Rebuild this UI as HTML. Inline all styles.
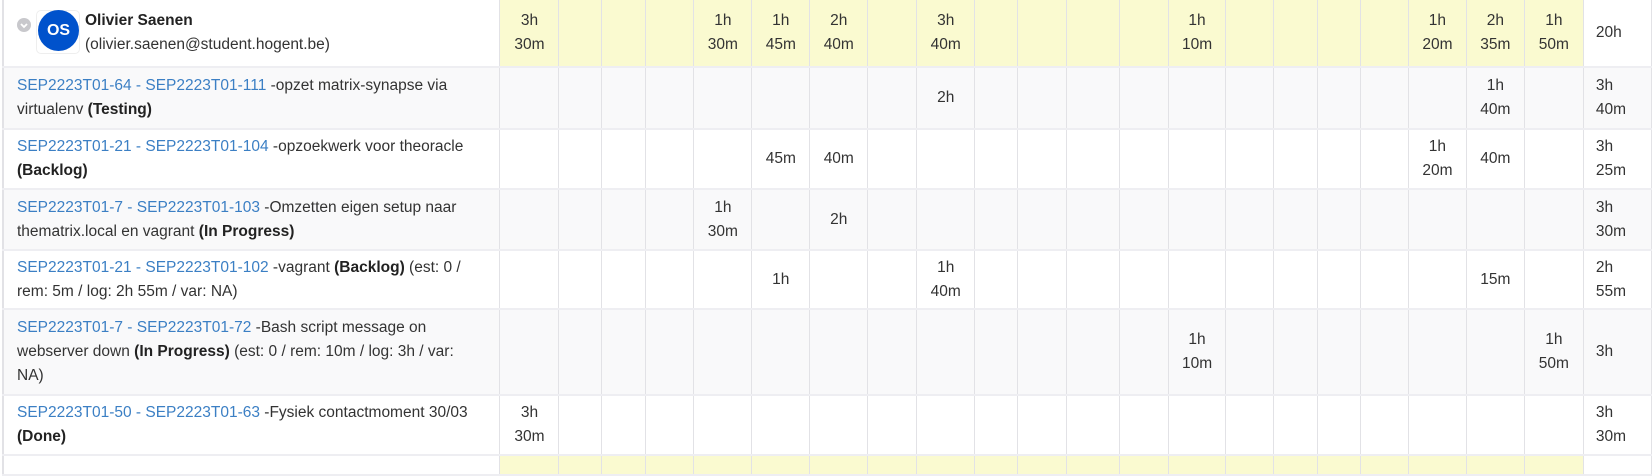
<!DOCTYPE html>
<html><head><meta charset="utf-8"><style>
body{margin:0;background:#fff;width:1652px;height:460px;overflow:hidden;font-family:"Liberation Sans",sans-serif;font-size:15.5px;color:#333}
table{position:absolute;left:2px;top:0;border-collapse:collapse;table-layout:fixed}
td{border-left:1px solid #e2e2e6;border-right:1px solid #e2e2e6;border-bottom:2px solid #eeeef2;text-align:center;line-height:24px;padding:0;vertical-align:middle;white-space:nowrap}
td.f{text-align:left;padding-left:13px;border-left:2px solid #e2e2e6}
td.t{text-align:left;padding-left:12px}
tr.g td{background:#f9f9fa}
tr.h td{background:#fafad0}
tr.h td.f,tr.h td.t{background:#fff}
a{color:#3b7fc4;text-decoration:none}
b{color:#222}
</style></head><body>
<table>
<colgroup><col style="width:497px"><col style="width:59px"><col style="width:43px"><col style="width:44px"><col style="width:48px"><col style="width:58px"><col style="width:58px"><col style="width:58px"><col style="width:49px"><col style="width:58px"><col style="width:43px"><col style="width:49px"><col style="width:53px"><col style="width:49px"><col style="width:57px"><col style="width:48px"><col style="width:44px"><col style="width:43px"><col style="width:48px"><col style="width:58px"><col style="width:58px"><col style="width:59px"><col style="width:68px"></colgroup>
<tr class="h" style="height:67px"><td class="f" style="position:relative">
<div style="position:absolute;left:13px;top:18px;width:14px;height:14px;border-radius:50%;background:#c8c8cc"><svg width="14" height="14" style="position:absolute;left:0;top:0"><path d="M4 6 L7 9 L10 6" stroke="#fff" stroke-width="1.8" fill="none"/></svg></div>
<div style="position:absolute;left:32px;top:10px;width:42px;height:42px;border:1px solid #eee;border-radius:5px;background:#fff"></div>
<div style="position:absolute;left:34px;top:10px;width:41px;height:41px;border-radius:50%;background:#0052cc;color:#fff;font-weight:bold;font-size:16px;line-height:41px;text-align:center">OS</div>
<div style="position:absolute;left:81px;top:9px;line-height:24px;font-size:15.5px"><b>Olivier Saenen</b><br>(olivier.saenen@student.hogent.be)</div>
</td><td>3h<br>30m</td><td></td><td></td><td></td><td>1h<br>30m</td><td>1h<br>45m</td><td>2h<br>40m</td><td></td><td>3h<br>40m</td><td></td><td></td><td></td><td></td><td>1h<br>10m</td><td></td><td></td><td></td><td></td><td>1h<br>20m</td><td>2h<br>35m</td><td>1h<br>50m</td><td class="t">20h</td></tr>
<tr class="g" style="height:62px"><td class="f"><a>SEP2223T01-64 - SEP2223T01-111</a> -opzet matrix-synapse via<br>virtualenv <b>(Testing)</b></td><td></td><td></td><td></td><td></td><td></td><td></td><td></td><td></td><td>2h</td><td></td><td></td><td></td><td></td><td></td><td></td><td></td><td></td><td></td><td></td><td>1h<br>40m</td><td></td><td class="t">3h<br>40m</td></tr>
<tr style="height:60px"><td class="f"><a>SEP2223T01-21 - SEP2223T01-104</a> -opzoekwerk voor theoracle<br><b>(Backlog)</b></td><td></td><td></td><td></td><td></td><td></td><td>45m</td><td>40m</td><td></td><td></td><td></td><td></td><td></td><td></td><td></td><td></td><td></td><td></td><td></td><td>1h<br>20m</td><td>40m</td><td></td><td class="t">3h<br>25m</td></tr>
<tr class="g" style="height:61px"><td class="f"><a>SEP2223T01-7 - SEP2223T01-103</a> -Omzetten eigen setup naar<br>thematrix.local en vagrant <b>(In Progress)</b></td><td></td><td></td><td></td><td></td><td>1h<br>30m</td><td></td><td>2h</td><td></td><td></td><td></td><td></td><td></td><td></td><td></td><td></td><td></td><td></td><td></td><td></td><td></td><td></td><td class="t">3h<br>30m</td></tr>
<tr style="height:59px"><td class="f"><a>SEP2223T01-21 - SEP2223T01-102</a> -vagrant <b>(Backlog)</b> (est: 0 /<br>rem: 5m / log: 2h 55m / var: NA)</td><td></td><td></td><td></td><td></td><td></td><td>1h</td><td></td><td></td><td>1h<br>40m</td><td></td><td></td><td></td><td></td><td></td><td></td><td></td><td></td><td></td><td></td><td>15m</td><td></td><td class="t">2h<br>55m</td></tr>
<tr class="g" style="height:86px"><td class="f"><a>SEP2223T01-7 - SEP2223T01-72</a> -Bash script message on<br>webserver down <b>(In Progress)</b> (est: 0 / rem: 10m / log: 3h / var:<br>NA)</td><td></td><td></td><td></td><td></td><td></td><td></td><td></td><td></td><td></td><td></td><td></td><td></td><td></td><td>1h<br>10m</td><td></td><td></td><td></td><td></td><td></td><td></td><td>1h<br>50m</td><td class="t">3h</td></tr>
<tr style="height:60px"><td class="f"><a>SEP2223T01-50 - SEP2223T01-63</a> -Fysiek contactmoment 30/03<br><b>(Done)</b></td><td>3h<br>30m</td><td></td><td></td><td></td><td></td><td></td><td></td><td></td><td></td><td></td><td></td><td></td><td></td><td></td><td></td><td></td><td></td><td></td><td></td><td></td><td></td><td class="t">3h<br>30m</td></tr>
<tr class="h" style="height:20px"><td class="f"></td><td></td><td></td><td></td><td></td><td></td><td></td><td></td><td></td><td></td><td></td><td></td><td></td><td></td><td></td><td></td><td></td><td></td><td></td><td></td><td></td><td></td><td class="t"></td></tr>
</table>
</body></html>
